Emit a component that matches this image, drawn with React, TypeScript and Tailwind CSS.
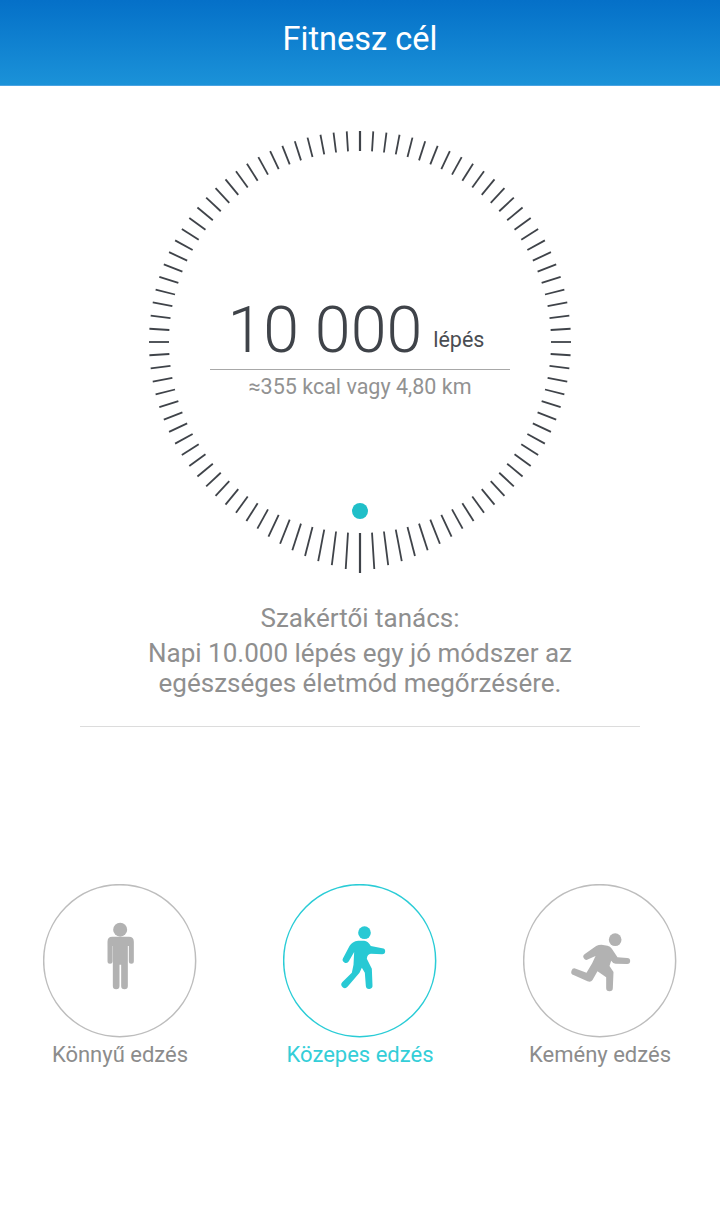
import React from 'react';

const CX = 240;
const CY = 240;
const INNER = 191;
const BOTTOM_LEN = [40, 36.5, 34, 32, 30, 28, 26, 24, 22, 21];

function Ticks() {
  const ticks = [];
  for (let i = 0; i < 100; i++) {
    const a = (i * 3.6 * Math.PI) / 180;
    const fromBottom = Math.abs(i <= 50 ? 50 - i : i - 50);
    const len = BOTTOM_LEN[fromBottom] ?? 20;
    const s = Math.sin(a);
    const c = Math.cos(a);
    ticks.push(
      <line
        key={i}
        x1={CX + INNER * s}
        y1={CY - INNER * c}
        x2={CX + (INNER + len) * s}
        y2={CY - (INNER + len) * c}
        stroke="#3f4349"
        strokeWidth={fromBottom === 0 || i === 0 ? 2.2 : 1.8}
      />
    );
  }
  return (
    <svg viewBox="0 0 480 480" className="absolute left-0 top-0 w-[480px] h-[480px]">
      {ticks}
      <circle cx={CX} cy={CY + 169} r={8} fill="#20bfc8" />
    </svg>
  );
}

function StandIcon() {
  return (
    <g fill="#b2b2b2">
      <circle cx="270" cy="163" r="21" />
      <path d="M246 184 H296 Q311 184 311 199 V258 a7.5 7.5 0 0 1 -15 0 V212 H293 V332 a10 10 0 0 1 -20 0 V268 H268 V332 a10 10 0 0 1 -20 0 V212 H247 V258 a7.5 7.5 0 0 1 -15 0 V199 Q232 184 246 184 Z" />
    </g>
  );
}

function WalkIcon() {
  return (
    <g fill="#28c9d4">
      <circle cx="283" cy="172" r="19" />
      <path d="M219 248 L238 212 Q246 198 264 196 H282 Q294 197 302 212 L336 219 A9 9 0 0 1 336 237 L302 235 Q291 236 290 250 L305 280 L307 330 A10 10 0 0 1 287 332 L284 292 L275 277 L268 292 L232 334 A10 10 0 0 1 216 321 L245 292 L250 268 L252 230 L236 258 A9 9 0 0 1 219 248 Z" />
    </g>
  );
}

function RunIcon() {
  return (
    <g fill="#b2b2b2">
      <circle cx="315" cy="193" r="19" />
      <path d="M224 236 L258 212 Q265 208 274 208 L292 211 Q300 213 305 220 L322 246 L351 248 A9 9 0 0 1 351 266 L316 265 Q308 264 303 256 L298 272 L310 290 L308 338 A10 10 0 0 1 288 338 L288 306 L262 288 L247 314 Q242 322 232 318 L190 299 A9 9 0 0 1 197 280 L229 292 L246 264 L256 242 L234 252 A9 9 0 0 1 224 236 Z" />
    </g>
  );
}

function Mode({ label, active, children }: { label: string; active?: boolean; children: React.ReactNode }) {
  return (
    <div className="flex flex-col items-center w-[240px]">
      <svg viewBox="38.5 26 462 462" className="w-[154px] h-[154px]">
        <circle cx="268.5" cy="256" r="228" fill="none" stroke={active ? '#2accd6' : '#bdbdbd'} strokeWidth="4.5" />
        {children}
      </svg>
      <span className={active ? 'mt-[2px] text-[22px] leading-[30px] text-[#34ced8]' : 'mt-[2px] text-[22px] leading-[30px] text-[#8c8c8c]'}>
        {label}
      </span>
    </div>
  );
}

export default function App() {
  return (
    <div className="w-[720px] h-[1220px] bg-white flex flex-col overflow-hidden font-['Roboto',sans-serif]">
      <header className="h-[86px] shrink-0 flex items-center justify-center pb-[6px] border-b border-[#4aa3e2] bg-gradient-to-b from-[#0570c8] to-[#1b92d8]">
        <h1 className="text-[32.5px] leading-none font-normal text-white">Fitnesz cél</h1>
      </header>

      <section className="relative w-[480px] h-[485px] mx-auto mt-[16px] shrink-0">
        <Ticks />
        <div className="relative flex flex-col items-center pt-[193px]">
          <div className="w-[300px] h-[75px] pr-[8px] flex items-start justify-center border-b border-[#a8a8a8]">
            <span className="text-[64.5px] leading-[70px] font-[350] text-[#3f4349]">10 000</span>
            <span className="ml-[11px] mt-[30px] text-[21.5px] leading-[30px] text-[#4a4d52]">lépés</span>
          </div>
          <p className="mt-[2px] text-[21.5px] leading-[30px] text-[#929292]">≈355 kcal vagy 4,80 km</p>
        </div>
      </section>

      <section className="flex flex-col items-center text-[26px] text-[#8f8f8f] mt-[14px]">
        <p className="leading-[34px]">Szakértői tanács:</p>
        <p className="leading-[30px] text-center mt-[3px]">
          Napi 10.000 lépés egy jó módszer az
          <br />
          egészséges életmód megőrzésére.
        </p>
      </section>

      <div className="mx-[80px] mt-[28px] h-px bg-[#dcdcdc]" />

      <section className="flex mt-[157px]">
        <Mode label="Könnyű edzés">
          <StandIcon />
        </Mode>
        <Mode label="Közepes edzés" active>
          <WalkIcon />
        </Mode>
        <Mode label="Kemény edzés">
          <RunIcon />
        </Mode>
      </section>
    </div>
  );
}
